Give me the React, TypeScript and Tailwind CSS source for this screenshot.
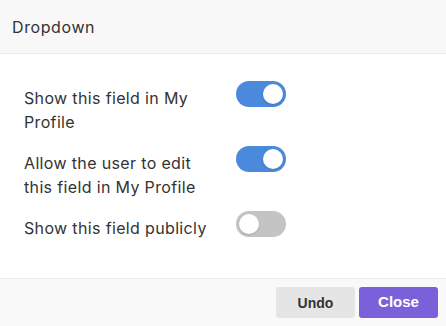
import React, { useState } from 'react';

const Toggle: React.FC<{ on: boolean; onChange: () => void }> = ({ on, onChange }) => (
  <button
    onClick={onChange}
    className={`relative w-[50px] h-[26px] rounded-full shrink-0 transition ${on ? 'bg-[#4a89dc]' : 'bg-[#c4c4c4]'}`}
  >
    <span
      className={`absolute top-[3px] w-[20px] h-[20px] rounded-full bg-white shadow-sm transition-all ${on ? 'left-[27px]' : 'left-[3px]'}`}
    />
  </button>
);

export default function App() {
  const [flags, setFlags] = useState([true, true, false]);
  const labels = [
    'Show this field in My Profile',
    'Allow the user to edit this field in My Profile',
    'Show this field publicly',
  ];

  const flip = (i: number) => setFlags(f => f.map((v, j) => (j === i ? !v : v)));

  return (
    <div className="w-[446px] h-[326px] bg-white flex flex-col font-['Inter',sans-serif] text-[#333]">
      <div className="h-[54px] bg-[#f8f8f8] border-b border-[#ececec] flex items-center px-3 shrink-0">
        <h2 className="text-[16px] tracking-[0.6px]">Dropdown</h2>
      </div>

      <div className="flex-1 pt-[27px] pl-6 flex flex-col gap-3">
        {labels.map((label, i) => (
          <div key={label} className="flex items-start gap-6">
            <p className="w-[188px] pt-[5px] text-[16px] leading-6 tracking-[0.35px]">{label}</p>
            <Toggle on={flags[i]} onChange={() => flip(i)} />
          </div>
        ))}
      </div>

      <div className="h-[48px] bg-[#f9f9f9] border-t border-[#ececec] flex items-center justify-end gap-1 px-2 shrink-0">
        <button className="w-[79px] h-[31px] rounded-[3px] bg-[#e5e5e5] text-[#333] text-sm font-bold font-['Liberation_Sans',sans-serif]">
          Undo
        </button>
        <button className="w-[79px] h-[31px] rounded-[3px] bg-[#7b61d9] text-white text-[15px] font-bold font-['Liberation_Sans',sans-serif]">
          Close
        </button>
      </div>
    </div>
  );
}
